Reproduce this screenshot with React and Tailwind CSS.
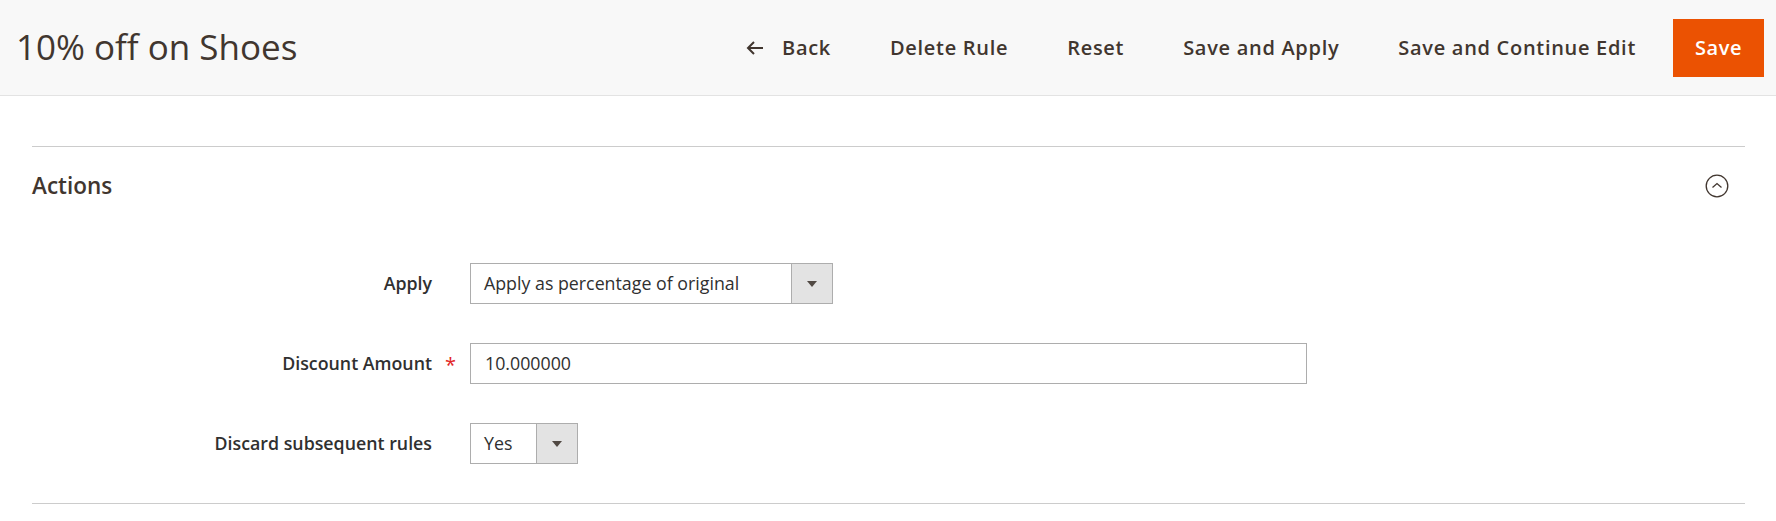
import React from "react";

const font = { fontFamily: '"Open Sans", "Noto Sans", sans-serif' };

function Caret() {
  return (
    <svg width="10" height="6" viewBox="0 0 10 6" aria-hidden="true">
      <path d="M0 0 L10 0 L5 6 Z" fill="#514943" />
    </svg>
  );
}

function SelectBox({ value, width }) {
  return (
    <div
      className={`flex h-[41px] items-stretch border border-[#adadad] bg-white ${width}`}
    >
      <div className="flex flex-1 items-center pl-[13px] text-[17.8px] text-[#303030]">
        {value}
      </div>
      <div className="flex w-[41px] items-center justify-center border-l border-[#adadad] bg-[#e3e3e3]">
        <Caret />
      </div>
    </div>
  );
}

function Row({ label, required, children }) {
  return (
    <div className="flex items-center">
      <div className="relative flex w-[400px] justify-end">
        <span className="text-[17.8px] font-semibold text-[#303030]">{label}</span>
        {required && (
          <span className="absolute left-[413px] top-[2px] text-[20px] leading-[26px] text-[#e22626]">
            *
          </span>
        )}
      </div>
      <div className="ml-[38px]">{children}</div>
    </div>
  );
}

function HeaderButton({ children }) {
  return (
    <button className="flex h-[58px] items-center px-[22px] text-[20px] font-semibold tracking-[0.035em] text-[#41362f]">
      {children}
    </button>
  );
}

export default function App() {
  return (
    <div className="min-h-[521px] w-full bg-white" style={font}>
      <header className="flex h-[96px] items-center justify-between border-b border-[#e3e3e3] bg-[#f8f8f8] pl-[16px] pr-[12px]">
        <h1 className="mt-[-2px] text-[35px] font-normal leading-none text-[#41362f]">
          10% off on Shoes
        </h1>
        <div className="flex items-center gap-[15px]">
          <HeaderButton>
            <svg
              width="18"
              height="16"
              viewBox="0 0 18 16"
              className="mr-[18px]"
              aria-hidden="true"
            >
              <path
                d="M17 8 H2 M8 2 L2 8 L8 14"
                fill="none"
                stroke="#41362f"
                strokeWidth="2"
              />
            </svg>
            Back
          </HeaderButton>
          <HeaderButton>Delete Rule</HeaderButton>
          <HeaderButton>Reset</HeaderButton>
          <HeaderButton>Save and Apply</HeaderButton>
          <HeaderButton>Save and Continue Edit</HeaderButton>
          <button className="flex h-[58px] w-[91px] items-center justify-center bg-[#eb5202] text-[20px] font-semibold tracking-[0.025em] text-white">
            Save
          </button>
        </div>
      </header>

      <section className="ml-[32px] mr-[31px] mt-[50px] border-t border-b border-[#cccccc]">
        <div className="flex h-[78px] items-center justify-between pr-[16px]">
          <h2 className="text-[22.5px] font-semibold text-[#41362f]">Actions</h2>
          <svg width="24" height="24" viewBox="0 0 24 24" aria-hidden="true">
            <circle cx="12" cy="12" r="10.8" fill="none" stroke="#41362f" strokeWidth="1.3" />
            <path d="M7.5 13.5 L12 9.5 L16.5 13.5" fill="none" stroke="#41362f" strokeWidth="1.3" />
          </svg>
        </div>
        <div className="flex flex-col gap-[39px] pb-[39px] pt-[38px]">
          <Row label="Apply">
            <SelectBox value="Apply as percentage of original" width="w-[363px]" />
          </Row>
          <Row label="Discount Amount" required>
            <div className="flex h-[41px] w-[837px] items-center border border-[#adadad] bg-white pl-[14px] text-[17.8px] text-[#303030]">
              10.000000
            </div>
          </Row>
          <Row label="Discard subsequent rules">
            <SelectBox value="Yes" width="w-[108px]" />
          </Row>
        </div>
      </section>
    </div>
  );
}
